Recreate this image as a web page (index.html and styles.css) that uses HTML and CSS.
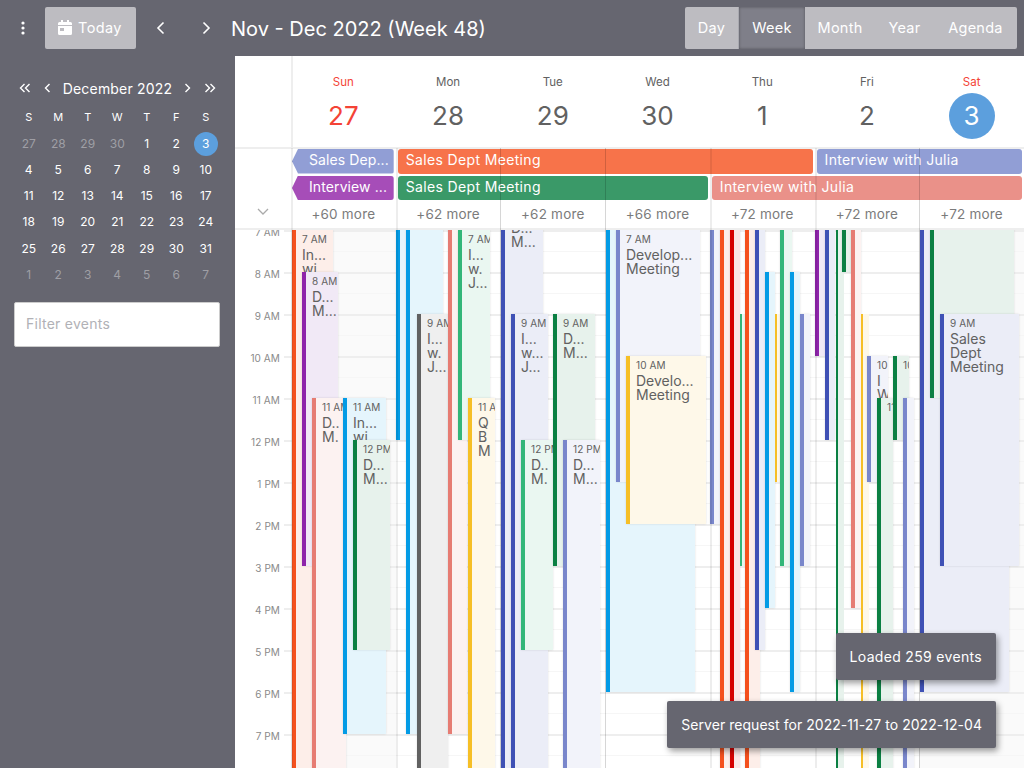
FILE: index.html
```html
<!DOCTYPE html>
<html lang="en">
<head>
  <meta charset="UTF-8">
  <meta name="viewport" content="width=device-width, initial-scale=1.0">
  <title>Calendar</title>
  <link rel="stylesheet" href="styles.css">
</head>
<body>
  <header class="topbar">
    <button class="icon-btn menu-btn">
      <svg width="4" height="14" viewBox="0 0 4 14"><circle cx="2" cy="2" r="1.6"/><circle cx="2" cy="7" r="1.6"/><circle cx="2" cy="12" r="1.6"/></svg>
    </button>
    <button class="today-btn">
      <svg width="14" height="15" viewBox="0 0 14 15"><path d="M3 0h2v2h4V0h2v2h1.500A1.500 1.500 0 0 1 14 3.500V5H0V3.500A1.500 1.500 0 0 1 1.500 2H3zM0 6h14v7.500a1.500 1.500 0 0 1-1.500 1.500h-11A1.500 1.500 0 0 1 0 13.500zm2 2v3h4V8z"/></svg>
      Today
    </button>
    <button class="icon-btn nav-btn">
      <svg width="9" height="14" viewBox="0 0 9 14"><path d="M7.500 1.500 2 7l5.500 5.500"/></svg>
    </button>
    <button class="icon-btn nav-btn">
      <svg width="9" height="14" viewBox="0 0 9 14"><path d="M1.500 1.500 7 7l-5.500 5.500"/></svg>
    </button>
    <div class="range-title">Nov - Dec 2022 (Week 48)</div>
    <div class="view-switch">
      <button class="view-day">Day</button>
      <button class="view-week active">Week</button>
      <button class="view-month">Month</button>
      <button class="view-year">Year</button>
      <button class="view-agenda">Agenda</button>
    </div>
  </header>

  <div class="main">
    <aside class="sidebar">
      <div class="mini-head">
        <svg width="12" height="10" viewBox="0 0 12 10"><path d="M5.500 1 1.500 5l4 4M10.500 1l-4 4 4 4"/></svg>
        <svg class="mini-prev" width="7" height="10" viewBox="0 0 7 10"><path d="M5.500 1 1.500 5l4 4"/></svg>
        <span class="mini-month">December 2022</span>
        <svg class="mini-next" width="7" height="10" viewBox="0 0 7 10"><path d="M1.500 1l4 4-4 4"/></svg>
        <svg width="12" height="10" viewBox="0 0 12 10"><path d="M1.500 1l4 4-4 4M6.500 1l4 4-4 4"/></svg>
      </div>
      <div class="mini-grid" id="mini-grid"></div>
      <input class="filter" type="text" placeholder="Filter events">
    </aside>

    <section class="calendar">
      <div class="day-heads">
        <div class="corner"></div>
        <div class="day-head weekend"><span class="dname">Sun</span><span class="dnum">27</span></div>
        <div class="day-head"><span class="dname">Mon</span><span class="dnum">28</span></div>
        <div class="day-head"><span class="dname">Tue</span><span class="dnum">29</span></div>
        <div class="day-head"><span class="dname">Wed</span><span class="dnum">30</span></div>
        <div class="day-head"><span class="dname">Thu</span><span class="dnum">1</span></div>
        <div class="day-head"><span class="dname">Fri</span><span class="dnum">2</span></div>
        <div class="day-head weekend today"><span class="dname">Sat</span><span class="dnum">3</span></div>
      </div>

      <div class="allday">
        <div class="allday-side">
          <svg width="12" height="7" viewBox="0 0 12 7"><path d="M1 1l5 5 5-5"/></svg>
        </div>
        <div class="allday-main">
          <div class="allday-grid">
            <div class="bar bar-indigo cont span-sun">Sales Dep...</div>
            <div class="bar bar-tomato span-mon-thu">Sales Dept Meeting</div>
            <div class="bar bar-indigo span-fri-sat">Interview with Julia</div>
            <div class="bar bar-purple cont span-sun">Interview ...</div>
            <div class="bar bar-green span-mon-wed">Sales Dept Meeting</div>
            <div class="bar bar-salmon span-thu-sat">Interview with Julia</div>
          </div>
          <div class="more-row">
            <span>+60 more</span><span>+62 more</span><span>+62 more</span><span>+66 more</span><span>+72 more</span><span>+72 more</span><span>+72 more</span>
          </div>
        </div>
      </div>

      <div class="cal-body">
        <div class="axis">
          <div class="axis-labels" id="axis-labels"></div>
        </div>
        <div class="days">
          <div class="day weekend"></div>
          <div class="day"></div>
          <div class="day"></div>
          <div class="day"></div>
          <div class="day"></div>
          <div class="day"></div>
          <div class="day weekend"></div>
          <div class="events" id="events"></div>
        </div>
      </div>

      <div class="col-lines">
        <i class="soft"></i><i class="soft"></i><i></i><i></i><i class="soft"></i><i class="soft"></i><i></i>
      </div>
    </section>
  </div>

  <div class="toasts">
    <div class="toast">Loaded 259 events</div>
    <div class="toast toast-request">Server request for 2022-11-27 to 2022-12-04</div>
  </div>

  <script src="events.js"></script>
</body>
</html>
```

FILE: styles.css
```css
* {
  box-sizing: border-box;
}
html, body {
  margin: 0;
  height: 100%;
  overflow: hidden;
}
body {
  font-family: Inter, "Liberation Sans", sans-serif;
  background-color: #666670;
  color: #fff;
  display: flex;
  flex-direction: column;
}
button {
  font: inherit;
  color: inherit;
  border: none;
  background: none;
  padding: 0;
}

/* top bar */
.topbar {
  height: 56px;
  flex: none;
  display: flex;
  align-items: center;
  padding: 0 7px 0 0;
}
.icon-btn {
  display: flex;
  align-items: center;
  justify-content: center;
}
.icon-btn svg {
  fill: #fff;
}
.menu-btn {
  width: 45px;
  height: 42px;
}
.today-btn {
  width: 91px;
  height: 42px;
  display: flex;
  align-items: center;
  padding: 0 0 1px 13px;
  gap: 6px;
  background-color: #bdbcc1;
  border-radius: 2px;
  font-size: 14.5px;
  letter-spacing: .4px;
}
.today-btn svg {
  fill: #fff;
}
.nav-btn {
  width: 46px;
  height: 42px;
  margin-left: 1px;
}
.nav-btn + .nav-btn {
  margin-left: 0;
}
.nav-btn svg {
  fill: none;
  stroke: #fff;
  stroke-width: 1.6;
}
.range-title {
  margin-left: 2px;
  padding-top: 1px;
  font-size: 20px;
  flex: 1;
  white-space: nowrap;
}
.view-switch {
  display: flex;
  height: 42px;
  background-color: #bdbcc1;
  border-radius: 2px;
  font-size: 14.5px;
}
.view-switch button {
  letter-spacing: .25px;
  padding-bottom: 1px;
}
.view-day { width: 54px; border-right: 1px solid #a9a9b0; }
.view-week { width: 66px; }
.view-month { width: 70px; }
.view-year { width: 59px; }
.view-agenda { width: 83px; }
.view-switch .active {
  background-color: #7f7f89;
  box-shadow: inset 0 0 3px rgba(0, 0, 0, .35);
}

/* sidebar */
.main {
  flex: 1;
  display: flex;
  min-height: 0;
}
.sidebar {
  width: 235px;
  flex: none;
  padding: 22px 14px 0;
}
.mini-head {
  height: 20px;
  display: flex;
  align-items: center;
  padding: 0 5px;
  font-size: 14px;
  letter-spacing: .2px;
}
.mini-head svg {
  fill: none;
  stroke: #fff;
  stroke-width: 1.4;
}
.mini-prev {
  margin-left: 13px;
}
.mini-month {
  flex: 1;
  text-align: center;
  white-space: nowrap;
}
.mini-next {
  margin-right: 13px;
}
.mini-grid {
  margin-top: 6px;
  display: grid;
  grid-template-columns: repeat(7, 29.5px);
  grid-auto-rows: 26.2px;
  font-size: 12px;
}
.mini-grid span {
  display: flex;
  align-items: center;
  justify-content: center;
}
.mini-grid .dow {
  font-size: 11px;
}
.mini-grid .muted {
  color: rgba(255, 255, 255, .38);
}
.mini-grid .selected {
  position: relative;
  z-index: 0;
}
.mini-grid .selected::before {
  content: "";
  position: absolute;
  z-index: -1;
  left: 3px;
  top: 1.5px;
  width: 24px;
  height: 24px;
  border-radius: 50%;
  background-color: #5c9fdd;
}
.filter {
  display: block;
  width: 206px;
  height: 45px;
  margin-top: 15px;
  padding: 0 11px 3px;
  border: 1px solid #ccc;
  border-radius: 2px;
  background: #fff;
  font: inherit;
  font-size: 14px;
  letter-spacing: .25px;
}
.filter::placeholder {
  color: #b1b1b6;
}

/* calendar */
.calendar {
  flex: 1;
  position: relative;
  background-color: #fff;
  color: #616161;
  display: flex;
  flex-direction: column;
  min-width: 0;
  overflow: hidden;
}
.day-heads {
  height: 93px;
  flex: none;
  display: grid;
  grid-template-columns: 56px repeat(7, 1fr);
  border-bottom: 2px solid #eee;
}
.corner {
  border-right: 2px solid #eee;
  margin-right: -2px;
}
.day-head {
  display: flex;
  flex-direction: column;
  align-items: center;
  padding-top: 19px;
}
.dname {
  font-size: 11.5px;
  line-height: 14px;
}
.dnum {
  margin-top: 4px;
  width: 46px;
  height: 46px;
  line-height: 46px;
  border-radius: 50%;
  text-align: center;
  font-size: 26px;
}
.day-head.weekend {
  color: #f44336;
}
.day-head.today .dnum {
  background-color: #5c9fdd;
  color: #fff;
}

.allday {
  height: 81px;
  flex: none;
  display: flex;
  border-bottom: 2px solid #eee;
}
.allday-side {
  width: 56px;
  flex: none;
  display: flex;
  justify-content: center;
  align-items: flex-end;
  padding: 0 0 13px;
}
.allday-side svg {
  fill: none;
  stroke: #aaa;
  stroke-width: 1.3;
}
.allday-main {
  flex: 1;
  min-width: 0;
}
.allday-grid {
  display: grid;
  grid-template-columns: repeat(7, 1fr);
  grid-auto-rows: 24.6px;
  row-gap: 2px;
}
.bar {
  margin: 0 2px;
  padding-left: 8px;
  border-radius: 3px;
  color: #fff;
  font-size: 14px;
  line-height: 22px;
  letter-spacing: .35px;
  white-space: nowrap;
  overflow: hidden;
}
.bar.cont {
  padding-left: 17px;
  margin-left: 1px;
  letter-spacing: .1px;
  clip-path: polygon(6px 0, 100% 0, 100% 100%, 6px 100%, 0 50%);
}
.span-sun { grid-column: span 1; }
.span-mon-thu { grid-column: span 4; }
.span-fri-sat { grid-column: span 2; }
.span-mon-wed { grid-column: span 3; }
.span-thu-sat { grid-column: span 3; }
.bar-indigo { background-color: #919ed5; }
.bar-purple { background-color: #a64db8; }
.bar-tomato { background-color: #f7734a; }
.bar-green { background-color: #3a9968; }
.bar-salmon { background-color: #ea9189; }
.more-row {
  height: 28px;
  display: grid;
  grid-template-columns: repeat(7, 1fr);
  align-items: center;
  justify-items: center;
  font-size: 13.5px;
  color: #7b7b7b;
  letter-spacing: .2px;
}

.cal-body {
  flex: 1;
  display: flex;
  min-height: 0;
  overflow: hidden;
}
.axis {
  width: 56px;
  flex: none;
  overflow: hidden;
  background: repeating-linear-gradient(to bottom, #eee 0, #eee 2px, transparent 2px, transparent 42px) right top / 7px 100% no-repeat;
}
.axis-labels {
  margin-top: -5px;
}
.axis-labels div {
  height: 42px;
  line-height: 14px;
  padding-right: 11px;
  text-align: right;
  font-size: 10px;
  letter-spacing: .1px;
  color: #8a8a8a;
}
.days {
  flex: 1;
  position: relative;
  display: grid;
  grid-template-columns: repeat(7, 1fr);
}
.day {
  background-image: repeating-linear-gradient(to bottom, #eee 0, #eee 2px, transparent 2px, transparent 21px, #f6f6f6 21px, #f6f6f6 22px, transparent 22px, transparent 42px);
}
.day.weekend {
  background-color: #fafafa;
}
.events {
  position: absolute;
  inset: 0;
}
.event {
  position: absolute;
  border-left: 4px solid;
  padding: 3px 0 0 6px;
  overflow: hidden;
  box-shadow: 0 0 2px rgba(0, 0, 0, .12);
}
.event.thin {
  border-left-width: 2px;
  box-shadow: none;
}
.event-time {
  font-size: 10px;
  line-height: 12px;
  letter-spacing: .1px;
  white-space: nowrap;
  margin-bottom: 3px;
}
.event-line {
  font-size: 14px;
  line-height: 14px;
  white-space: nowrap;
}
.c-tomato { border-color: #f4511e; background-color: #fdeee9; }
.c-purple { border-color: #8e24aa; background-color: #f1e9f6; }
.c-salmon { border-color: #e67c73; background-color: #fcf2f1; }
.c-blue { border-color: #039be5; background-color: #e5f5fc; }
.c-green { border-color: #0b8043; background-color: #e7f2ec; }
.c-grey { border-color: #616161; background-color: #efefef; }
.c-sage { border-color: #33b679; background-color: #eaf7f1; }
.c-yellow { border-color: #f6bf26; background-color: #fef8e9; }
.c-indigo { border-color: #3f51b5; background-color: #ebedf7; }
.c-lav { border-color: #7986cb; background-color: #f2f3fa; }
.c-red { border-color: #d50000; background-color: #fbe6e6; }

.col-lines {
  position: absolute;
  inset: 92px 0 0 56px;
  display: grid;
  grid-template-columns: repeat(7, 1fr);
  pointer-events: none;
}
.col-lines i {
  border-left: 1px solid rgba(0, 0, 0, .16);
}
.col-lines i.soft {
  border-left: 2px solid rgba(0, 0, 0, .07);
}

/* toasts */
.toasts {
  position: absolute;
  right: 28px;
  bottom: 20px;
  display: flex;
  flex-direction: column;
  align-items: flex-end;
  gap: 20.5px;
}
.toast {
  height: 47.5px;
  line-height: 47px;
  padding: 0 14px;
  background-color: #666670;
  border-radius: 2px;
  font-size: 14px;
  letter-spacing: .32px;
  white-space: nowrap;
  box-shadow: 2px 3px 6px rgba(0, 0, 0, .4);
}
.toast-request {
  letter-spacing: .04px;
}
```

FILE: events.js
```js
// mini month
const miniGrid = document.getElementById("mini-grid");
let miniHtml = "";
["S", "M", "T", "W", "T", "F", "S"].forEach(d => {
  miniHtml += '<span class="dow">' + d + "</span>";
});
const miniDays = [27, 28, 29, 30];
for (let i = 1; i <= 31; i++) miniDays.push(i);
for (let i = 1; i <= 7; i++) miniDays.push(i);
miniDays.forEach((d, i) => {
  let cls = "";
  if (i < 4 || i > 34) cls = "muted";
  if (i === 6) cls = "selected";
  miniHtml += '<span class="' + cls + '">' + d + "</span>";
});
miniGrid.innerHTML = miniHtml;

// hour labels
const hours = ["7 AM", "8 AM", "9 AM", "10 AM", "11 AM", "12 PM", "1 PM", "2 PM", "3 PM", "4 PM", "5 PM", "6 PM", "7 PM"];
document.getElementById("axis-labels").innerHTML = hours.map(h => "<div>" + h + "</div>").join("");

// x and right are page pixels, start and end are hours of the day
const GRID_LEFT = 291;
const GRID_TOP_HOUR = 7;
const HOUR_HEIGHT = 42;
const events = [
  [292, 333, 7, 22, "tomato", "7 AM", ["In...", "wi..."]],
  [302, 338, 8, 15, "purple", "8 AM", ["D...", "M..."]],
  [312, 346, 11, 22, "salmon", "11 AM", ["D..", "M."]],
  [343, 386, 11, 19, "blue", "11 AM", ["In...", "wi..."]],
  [353, 390, 12, 17, "green", "12 PM", ["D...", "M..."]],

  [396, 408, 6, 12, "blue", "", []],
  [406, 443, 6, 19, "blue", "", []],
  [417, 448, 9, 22, "grey", "9 AM", ["I...", "w.", "J..."]],
  [448, 467, 6, 19, "salmon", "", []],
  [458, 490, 7, 12, "sage", "7 AM", ["I...", "w.", "J..."]],
  [468, 495, 11, 22, "yellow", "11 AM", ["Q", "B", "M"]],

  [501, 543, 6.345, 22, "indigo", "6 AM", ["D...", "M..."]],
  [511, 548, 9, 22, "indigo", "9 AM", ["I...", "w...", "J..."]],
  [521, 553, 12, 17, "sage", "12 PM", ["D..", "M."]],
  [553, 595, 9, 15, "green", "9 AM", ["D...", "M..."]],
  [563, 600, 12, 22, "lav", "12 PM", ["D...", "M..."]],

  [606, 695, 6, 18, "blue", "", []],
  [616, 700, 7, 13, "lav", "7 AM", ["Develop...", "Meeting"]],
  [626, 706, 10, 14, "yellow", "10 AM", ["Develo...", "Meeting"]],

  [710, 722, 6, 14, "lav", "", []],
  [720, 732, 6, 22, "tomato", "", []],
  [730, 736, 6, 22, "red", "", []],
  [740, 742, 9, 15, "sage", "", []],
  [745, 760, 6, 22, "tomato", "", []],
  [755, 765, 6, 17, "indigo", "", []],
  [765, 775, 8, 16, "blue", "", []],
  [775, 777, 9, 13, "yellow", "", []],
  [780, 792, 6, 15, "sage", "", []],
  [790, 800, 8, 18, "blue", "", []],
  [800, 810, 9, 15, "lav", "", []],

  [815, 825, 6, 10, "purple", "", []],
  [825, 835, 6, 12, "indigo", "", []],
  [836, 838, 6, 22, "green", "", []],
  [842, 851, 6, 8, "green", "", []],
  [851, 858, 6, 16, "salmon", "", []],
  [861, 863, 9, 22, "yellow", "", []],
  [867, 888, 10, 13, "lav", "10 AM", ["I", "W"]],
  [877, 893, 11, 22, "green", "11 AM", []],
  [893, 909, 10, 12, "green", "10 AM", []],
  [903, 914, 11, 22, "lav", "", []],

  [920, 1009, 6, 18, "indigo", "", []],
  [930, 1014, 6, 11, "green", "", []],
  [940, 1019, 9, 15, "indigo", "9 AM", ["Sales", "Dept", "Meeting"]]
];

const layer = document.getElementById("events");
events.forEach(e => {
  const el = document.createElement("div");
  el.className = "event c-" + e[4] + (e[1] - e[0] <= 2 ? " thin" : "");
  el.style.left = (e[0] - GRID_LEFT) + "px";
  el.style.width = (e[1] - e[0]) + "px";
  el.style.top = (e[2] - GRID_TOP_HOUR) * HOUR_HEIGHT + "px";
  el.style.height = (e[3] - e[2]) * HOUR_HEIGHT + "px";
  let html = '<div class="event-time">' + e[5] + "</div>";
  e[6].forEach(line => {
    html += '<div class="event-line">' + line + "</div>";
  });
  el.innerHTML = html;
  layer.appendChild(el);
});
```
